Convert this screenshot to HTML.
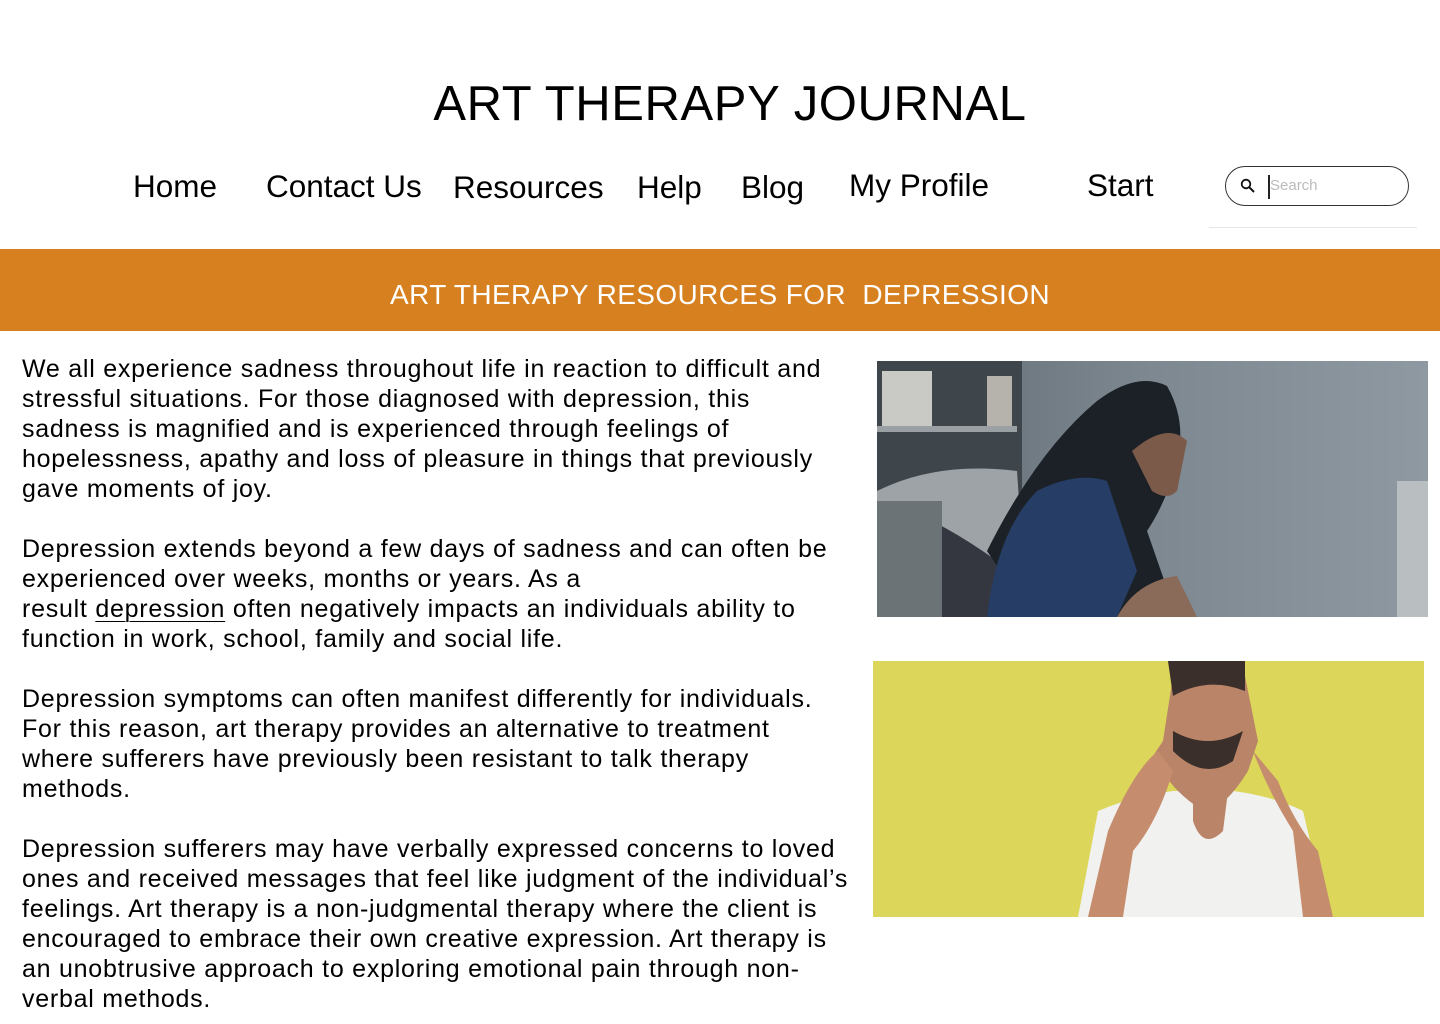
<!DOCTYPE html>
<html><head><meta charset="utf-8"><style>
*{margin:0;padding:0;box-sizing:border-box}
html,body{width:1440px;height:1024px;overflow:hidden}
body{background:#fff;font-family:"Liberation Sans",Arial,sans-serif;color:#000;position:relative}
h1{position:absolute;left:0;width:1460px;text-align:center;top:76px;font-size:49px;font-weight:400;letter-spacing:.6px;line-height:56px}
.nav{position:absolute;font-size:31.5px;line-height:36px;white-space:nowrap}
.search{position:absolute;left:1225px;top:166px;width:184px;height:40px;border:1.3px solid #333;border-radius:20px}
.sline{position:absolute;left:1209px;top:227px;width:208px;height:1px;background:#e6e6e6}
.banner{position:absolute;left:0;top:249px;width:1440px;height:82px;background:#D6801F;color:#fff;font-size:28px;text-align:center;line-height:92px;letter-spacing:.4px}
.body{position:absolute;left:22px;top:354px;font-size:25px;line-height:30px;white-space:nowrap;letter-spacing:.75px}
.body p{margin-bottom:30px}
u{text-decoration:underline;text-underline-offset:4px;text-decoration-thickness:1px}
</style></head><body>
<h1>ART THERAPY JOURNAL</h1>
<div class="nav" style="left:133px;top:168px">Home</div>
<div class="nav" style="left:266px;top:168px">Contact Us</div>
<div class="nav" style="left:453px;top:169px">Resources</div>
<div class="nav" style="left:637px;top:169px">Help</div>
<div class="nav" style="left:741px;top:169px">Blog</div>
<div class="nav" style="left:849px;top:167px">My Profile</div>
<div class="nav" style="left:1087px;top:167px">Start</div>
<div class="search">
<svg style="position:absolute;left:14px;top:11px" width="16" height="16" viewBox="0 0 16 16"><circle cx="6" cy="6" r="4.3" fill="none" stroke="#111" stroke-width="1.8"/><path d="M9.2 9.2L14 14" stroke="#111" stroke-width="2"/></svg>
<div style="position:absolute;left:42px;top:8px;width:2px;height:24px;background:#222"></div>
<div style="position:absolute;left:44px;top:10px;font-size:15px;color:#bbb">Search</div>
</div>
<div class="sline"></div>
<div class="banner">ART THERAPY RESOURCES FOR&nbsp; DEPRESSION</div>
<div class="body">
<p>We all experience sadness throughout life in reaction to difficult and<br>stressful situations. For those diagnosed with depression, this<br>sadness is magnified and is experienced through feelings of<br>hopelessness, apathy and loss of pleasure in things that previously<br>gave moments of joy.</p>
<p>Depression extends beyond a few days of sadness and can often be<br>experienced over weeks, months or years. As a<br>result <u>depression</u> often negatively impacts an individuals ability to<br>function in work, school, family and social life.</p>
<p>Depression symptoms can often manifest differently for individuals.<br>For this reason, art therapy provides an alternative to treatment<br>where sufferers have previously been resistant to talk therapy<br>methods.</p>
<p>Depression sufferers may have verbally expressed concerns to loved<br>ones and received messages that feel like judgment of the individual’s<br>feelings. Art therapy is a non-judgmental therapy where the client is<br>encouraged to embrace their own creative expression. Art therapy is<br>an unobtrusive approach to exploring emotional pain through non-<br>verbal methods.</p>
</div>
<svg style="position:absolute;left:877px;top:361px" width="551" height="256" viewBox="0 0 551 256">
<defs><linearGradient id="w" x1="0" x2="1"><stop offset="0" stop-color="#5f6a72"/><stop offset=".5" stop-color="#7d8891"/><stop offset="1" stop-color="#8e99a2"/></linearGradient></defs>
<rect width="551" height="256" fill="url(#w)"/>
<rect x="0" y="0" width="145" height="140" fill="#3e454b"/>
<rect x="5" y="10" width="50" height="55" fill="#c9c9c6"/>
<rect x="0" y="65" width="140" height="6" fill="#9aa0a4"/>
<rect x="110" y="15" width="25" height="50" fill="#b5b3ac"/>
<path d="M0 130 Q60 100 140 110 L150 256 L0 256Z" fill="#9da3a7"/>
<path d="M0 140 Q50 150 120 200 L160 256 L0 256Z" fill="#34373f"/>
<rect x="0" y="140" width="65" height="116" fill="#6c7377"/>
<path d="M155 256 L110 190 Q160 90 220 40 Q260 10 290 25 Q310 60 300 100 Q290 140 270 170 L300 256Z" fill="#1c2027"/>
<path d="M110 256 Q120 170 160 130 Q200 110 230 120 L260 210 L240 256Z" fill="#263e66"/>
<path d="M255 90 Q290 60 310 80 L300 130 Q290 140 275 130Z" fill="#7b5a4a"/>
<path d="M240 256 Q260 220 300 215 L320 256Z" fill="#8a6a58"/>
<rect x="520" y="120" width="31" height="136" fill="#b9bec1"/>
</svg>
<svg style="position:absolute;left:873px;top:661px" width="551" height="256" viewBox="0 0 551 256">
<rect width="551" height="256" fill="#dcd75a"/>
<path d="M205 256 L225 150 Q260 135 300 130 L360 130 Q400 135 430 150 L455 256Z" fill="#f1f1ef"/>
<path d="M330 150 Q300 130 290 110 L270 110 L290 80 L300 15 Q330 -5 370 5 L385 80 L375 110 Q350 150 330 150Z" fill="#b98467"/>
<path d="M320 160 Q330 190 350 170 L355 130 L320 130Z" fill="#b98467"/>
<path d="M295 0 L372 0 L372 30 Q335 15 300 35Z" fill="#3a2f2a"/>
<path d="M300 90 Q330 120 360 100 L370 70 Q335 90 300 70Z" fill="#3a2f2a"/>
<path d="M215 256 L235 170 Q260 110 285 90 L300 110 Q285 160 260 190 L250 256Z" fill="#c58d6d"/>
<path d="M430 256 L420 170 Q395 130 380 90 L405 120 Q420 160 445 190 L460 256Z" fill="#c58d6d"/>
</svg>
</body></html>
